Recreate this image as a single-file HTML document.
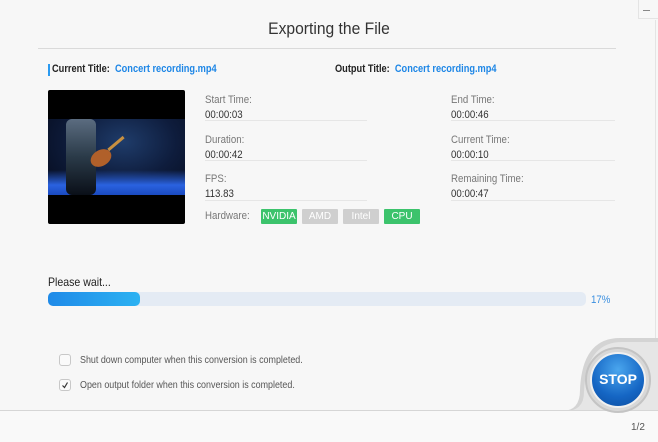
<!DOCTYPE html>
<html><head><meta charset="utf-8"><style>
*{margin:0;padding:0;box-sizing:border-box}
body{width:658px;height:442px;background:#f7f7f7;font-family:"Liberation Sans",sans-serif;position:relative;overflow:hidden;color:#333}
.a{position:absolute;white-space:nowrap}
.t{font-size:11px;transform:scaleX(.88);transform-origin:left center}
.lbl{color:#777}
.val{color:#333}
.ul{position:absolute;height:1px;background:#e6e6e6}
.b{position:absolute;top:209px;height:15px;width:36px;font-size:10px;color:#fff;text-align:center;line-height:15px;border-radius:1px}
.cb{position:absolute;left:59px;width:12px;height:12px;border:1px solid #c8c8c8;border-radius:3px;background:#fafafa}
.ck{font-size:10.5px;color:#555;transform:scaleX(.85);transform-origin:left center}
</style></head><body>
<div class="a" style="right:0;top:0;width:20px;height:19px;border-left:1px solid #e4e4e4;border-bottom:1px solid #e4e4e4"></div>
<div class="a" style="left:643px;top:10px;width:7px;height:1px;background:#888"></div>
<div class="a" style="right:2px;top:20px;width:1px;height:390px;background:#e4e4e4"></div>
<div class="a" style="left:0;width:658px;top:19px;text-align:center;font-size:17px;color:#333;transform:scaleX(.92)">Exporting the File</div>
<div class="a" style="left:38px;top:48px;width:578px;height:1px;background:#dadada"></div>
<div class="a" style="left:48px;top:64px;width:2px;height:12px;background:#2a9af0"></div>
<div class="a t" style="left:52px;top:63px;font-weight:bold;color:#222;transform:scaleX(.84)">Current Title:&nbsp; <span style="color:#1d86e6">Concert recording.mp4</span></div>
<div class="a t" style="left:335px;top:63px;font-weight:bold;color:#222;transform:scaleX(.84)">Output Title:&nbsp; <span style="color:#1d86e6">Concert recording.mp4</span></div>
<div class="a" style="left:48px;top:90px;width:137px;height:134px;background:#000;border-radius:2px;overflow:hidden">
<div style="position:absolute;left:0;top:29px;width:137px;height:76px;background:radial-gradient(ellipse at 55% 30%,#1f3c6a 0%,#0e1c3c 50%,#050a1a 100%)"></div>
<div style="position:absolute;left:0;top:80px;width:137px;height:25px;background:linear-gradient(180deg,rgba(30,80,200,0),#2a62e0 60%,#1a4ac0)"></div>
<div style="position:absolute;left:18px;top:29px;width:30px;height:76px;background:linear-gradient(180deg,#5b6c80,#2a3a48 50%,#0a0f18);border-radius:6px"></div>
<div style="position:absolute;left:42px;top:60px;width:22px;height:16px;background:#b0602a;border-radius:50%;transform:rotate(-30deg)"></div>
<div style="position:absolute;left:58px;top:52px;width:20px;height:3px;background:#c89040;transform:rotate(-40deg)"></div>
</div>
<div class="a t lbl" style="left:205px;top:94px">Start Time:</div>
<div class="a t val" style="left:205px;top:109px">00:00:03</div>
<div class="ul" style="left:205px;top:120px;width:162px"></div>
<div class="a t lbl" style="left:205px;top:134px">Duration:</div>
<div class="a t val" style="left:205px;top:149px">00:00:42</div>
<div class="ul" style="left:205px;top:160px;width:162px"></div>
<div class="a t lbl" style="left:205px;top:173px">FPS:</div>
<div class="a t val" style="left:205px;top:188px">113.83</div>
<div class="ul" style="left:205px;top:200px;width:162px"></div>
<div class="a t lbl" style="left:451px;top:94px">End Time:</div>
<div class="a t val" style="left:451px;top:109px">00:00:46</div>
<div class="ul" style="left:451px;top:120px;width:164px"></div>
<div class="a t lbl" style="left:451px;top:134px">Current Time:</div>
<div class="a t val" style="left:451px;top:149px">00:00:10</div>
<div class="ul" style="left:451px;top:160px;width:164px"></div>
<div class="a t lbl" style="left:451px;top:173px">Remaining Time:</div>
<div class="a t val" style="left:451px;top:188px">00:00:47</div>
<div class="ul" style="left:451px;top:200px;width:164px"></div>
<div class="a t lbl" style="left:205px;top:210px">Hardware:</div>
<div class="b" style="left:261px;background:#3cc36c">NVIDIA</div>
<div class="b" style="left:302px;background:#cfcfcf">AMD</div>
<div class="b" style="left:343px;background:#cfcfcf">Intel</div>
<div class="b" style="left:384px;background:#3cc36c">CPU</div>
<div class="a" style="left:48px;top:275px;font-size:12px;color:#222;transform:scaleX(.88);transform-origin:left">Please wait...</div>
<div class="a" style="left:48px;top:292px;width:538px;height:14px;background:#e4ebf4;border-radius:5px"></div>
<div class="a" style="left:48px;top:292px;width:92px;height:14px;background:linear-gradient(90deg,#1f8ae8,#2cb2f2);border-radius:5px"></div>
<div class="a t" style="left:591px;top:294px;color:#3a8fe0">17%</div>
<div class="cb" style="top:354px"></div>
<div class="a ck" style="left:80px;top:354px">Shut down computer when this conversion is completed.</div>
<div class="cb" style="top:379px"></div>
<svg class="a" style="left:59px;top:379px" width="12" height="12"><path d="M3.5 6.5 L5.5 8.5 L8.5 3.5" stroke="#333" stroke-width="1.2" fill="none"/></svg>
<div class="a ck" style="left:80px;top:379px">Open output folder when this conversion is completed.</div>
<svg class="a" style="left:540px;top:330px" width="118" height="82"><path d="M22 81 Q40 81 40 60 Q42 8 80 8 L118 8 L118 81 Z" fill="#d4d4d4"/><path d="M25 81 Q44 81 44 62 Q46 12 82 12 L118 12 L118 81 Z" fill="#e6e6e6"/></svg>
<div class="a" style="left:0;top:410px;width:658px;height:1px;background:#d6d6d6"></div>
<div class="a" style="left:0;top:411px;width:658px;height:31px;background:#f9f9f9"></div>
<div class="a" style="left:585px;top:347px;width:66px;height:66px;border-radius:50%;background:#d8d8d8;border:2px solid #c4c4c4"></div>
<div class="a" style="left:590px;top:352px;width:56px;height:56px;border-radius:50%;background:radial-gradient(circle at 50% 30%,#4aa6ee,#1566c4 60%,#0c4c9e);border:2px solid #f0f0f0"></div>
<div class="a" style="left:590px;top:371px;width:56px;text-align:center;font-size:14px;font-weight:bold;color:#fff">STOP</div>
<div class="a" style="left:631px;top:422px;font-size:10px;color:#555">1/2</div>
</body></html>
